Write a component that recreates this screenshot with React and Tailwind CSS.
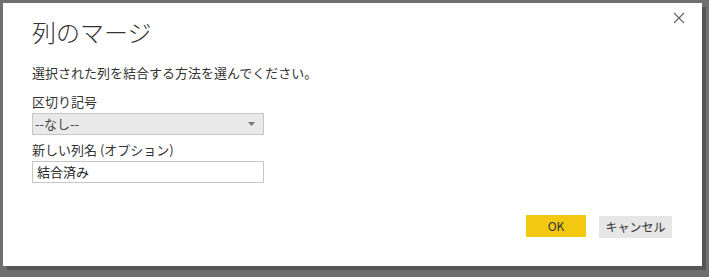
export default function App() {
    return (
        <div className="w-[709px] h-[277px] bg-[#6f6f6f] pt-[3px] pl-[3px] overflow-hidden" style={{ fontFamily: '"Noto Sans CJK JP", "Noto Sans", sans-serif' }}>
            <div className="relative w-[699px] h-[263px] bg-white shadow-[4px_4px_0_0_#555555] text-[#333333]">
                {/* close */}
                <button className="absolute right-[16px] top-[8px] w-[14px] h-[14px] flex items-center justify-center">
                    <svg width="12" height="12" viewBox="0 0 12 12" stroke="#666" strokeWidth="1.2">
                        <path d="M1 1 L11 11 M11 1 L1 11" />
                    </svg>
                </button>
                <div className="pl-[29px] pt-[13px]">
                    <h1 className="text-[24px] leading-[32px] font-light">列のマージ</h1>
                    <p className="mt-[16px] text-[13px] leading-[18px]">選択された列を結合する方法を選んでください。</p>
                    <div className="mt-[11px] text-[13px] leading-[18px]">区切り記号</div>
                    <div className="mt-[2px] w-[232px] h-[22px] bg-[#e9e9e9] border border-[#c6c6c6] flex items-center justify-between pl-[2px] pr-[8px] text-[13px] text-[#444]">
                        <span>--なし--</span>
                        <svg width="7" height="4" viewBox="0 0 7 4"><path d="M0 0 H7 L3.5 4 Z" fill="#777" /></svg>
                    </div>
                    <div className="mt-[6px] text-[13px] leading-[18px]">新しい列名 (オプション)</div>
                    <div className="mt-[2px] w-[232px] h-[22px] border border-[#c6c6c6] flex items-center pl-[4px] text-[13px] text-[#222]">結合済み</div>
                </div>
                <div className="absolute right-[30px] top-[212px] flex gap-[13px]">
                    <button className="w-[60px] h-[22px] bg-[#f2c811] text-[12px] text-[#333]">OK</button>
                    <button className="w-[73px] h-[22px] mt-[1px] bg-[#e6e6e6] text-[12px] text-[#333]">キャンセル</button>
                </div>
            </div>
        </div>
    );
}
